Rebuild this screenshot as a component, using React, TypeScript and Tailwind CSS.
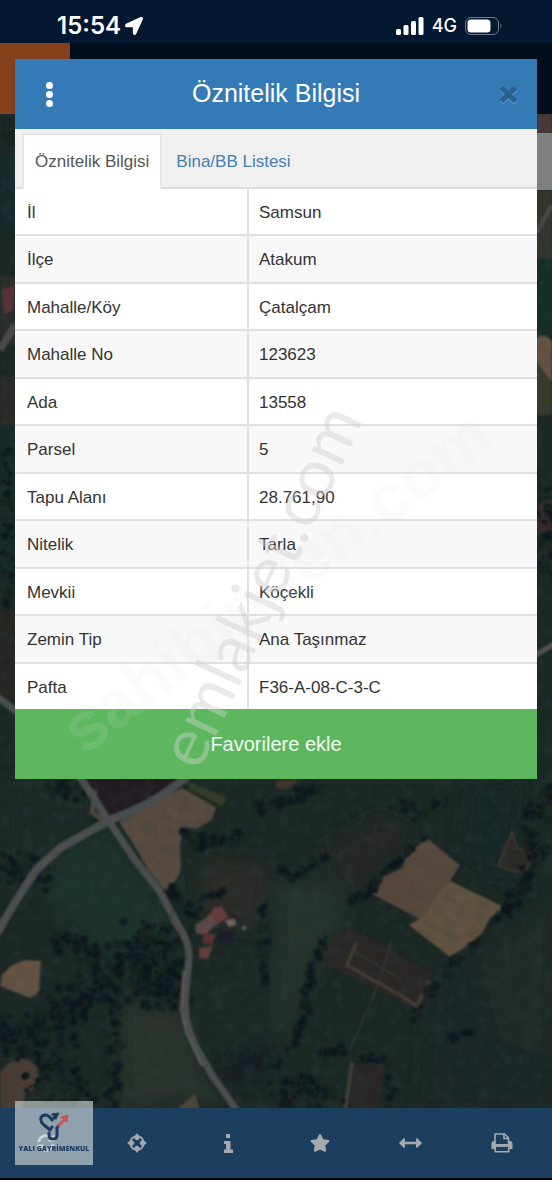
import { FaLocationArrow, FaStar, FaSyncAlt } from 'react-icons/fa';

const attributes = [
    { label: 'İl', value: 'Samsun' },
    { label: 'İlçe', value: 'Atakum' },
    { label: 'Mahalle/Köy', value: 'Çatalçam' },
    { label: 'Mahalle No', value: '123623' },
    { label: 'Ada', value: '13558' },
    { label: 'Parsel', value: '5' },
    { label: 'Tapu Alanı', value: '28.761,90' },
    { label: 'Nitelik', value: 'Tarla' },
    { label: 'Mevkii', value: 'Köçekli' },
    { label: 'Zemin Tip', value: 'Ana Taşınmaz' },
    { label: 'Pafta', value: 'F36-A-08-C-3-C' },
];

// Tree lines: points, spread around the line, number of crowns
const treeLines: { points: number[][]; spread: number; count: number }[] = [
    { points: [[0, 1045], [45, 1030], [70, 1000], [110, 985]], spread: 22, count: 230 },
    { points: [[110, 985], [125, 950], [150, 935], [180, 935]], spread: 11, count: 80 },
    { points: [[140, 940], [150, 975], [170, 995]], spread: 22, count: 230 },
    { points: [[55, 940], [75, 945], [95, 958]], spread: 9, count: 45 },
    { points: [[20, 1085], [60, 1060], [80, 1085], [60, 1110]], spread: 14, count: 70 },
    { points: [[110, 990], [115, 1050], [110, 1105]], spread: 6, count: 45 },
    { points: [[0, 870], [30, 865], [35, 885]], spread: 14, count: 50 },
    { points: [[50, 780], [85, 795]], spread: 9, count: 30 },
    { points: [[183, 832], [205, 845], [250, 830]], spread: 5, count: 45 },
    { points: [[255, 810], [290, 798], [320, 790]], spread: 6, count: 35 },
    { points: [[170, 890], [190, 910], [215, 890]], spread: 7, count: 30 },
    { points: [[262, 900], [265, 950], [262, 985]], spread: 4, count: 25 },
    { points: [[276, 868], [295, 877], [325, 858]], spread: 2, count: 45 },
    { points: [[345, 900], [370, 895], [385, 870], [425, 840]], spread: 3, count: 55 },
    { points: [[330, 937], [313, 960], [305, 1010], [295, 1045], [276, 1065]], spread: 4, count: 70 },
    { points: [[320, 1055], [345, 1050], [390, 1065], [392, 1105]], spread: 4, count: 45 },
    { points: [[552, 790], [530, 825], [540, 850], [515, 890], [505, 910]], spread: 9, count: 120 },
    { points: [[505, 910], [470, 948], [430, 990], [410, 1020]], spread: 4, count: 45 },
    { points: [[450, 1040], [470, 1033]], spread: 3, count: 14 },
    { points: [[276, 800], [320, 787]], spread: 4, count: 22 },
    { points: [[390, 798], [420, 815], [450, 800]], spread: 6, count: 22 },
    { points: [[546, 480], [546, 520], [544, 570]], spread: 8, count: 40 },
    { points: [[5, 450], [6, 570], [6, 610]], spread: 6, count: 40 },
    { points: [[270, 1100], [300, 1080], [335, 1100]], spread: 14, count: 60 },
];

function makeTrees() {
    let seed = 17;
    const rand = () => {
        seed = (seed * 16807) % 2147483647;
        return seed / 2147483647;
    };
    const trees: { x: number; y: number; r: number; fill: string }[] = [];
    treeLines.forEach(({ points, spread, count }) => {
        for (let i = 0; i < count; i++) {
            const t = rand() * (points.length - 1);
            const k = Math.floor(t);
            const [ax, ay] = points[k];
            const [bx, by] = points[k + 1];
            trees.push({
                x: ax + (bx - ax) * (t - k) + (rand() + rand() - 1) * 1.4 * spread,
                y: ay + (by - ay) * (t - k) + (rand() + rand() - 1) * 1.4 * spread,
                r: 1 + rand() * 3,
                fill: rand() > 0.35 ? '#0d161c' : '#14221f',
            });
        }
    });
    return trees;
}

const trees = makeTrees();

function SatelliteMap() {
    return (
        <svg className="absolute inset-0 -z-10 h-full w-full" viewBox="0 0 552 1180" preserveAspectRatio="xMidYMid slice" aria-hidden="true">
            <defs>
                <filter id="soft" x="-5%" y="-5%" width="110%" height="110%">
                    <feGaussianBlur stdDeviation="1.1" />
                </filter>
                <filter id="haze" x="-30%" y="-30%" width="160%" height="160%">
                    <feGaussianBlur stdDeviation="9" />
                </filter>
                <filter id="grain">
                    <feTurbulence type="fractalNoise" baseFrequency="0.09" numOctaves="4" seed="4" />
                    <feColorMatrix values="0 0 0 0 0.03  0 0 0 0 0.06  0 0 0 0 0.07  1.8 0 0 0 -0.75" />
                </filter>
            </defs>
            <rect width="552" height="1180" fill="#1b2824" />
            <g filter="url(#haze)">
                <path d="M0 780L90 785L90 840L0 900Z" fill="#1c2c28" />
                <path d="M60 850L110 830L180 930L110 960L40 900Z" fill="#1c302a" />
                <path d="M120 1000L180 1010L220 1100L120 1110Z" fill="#29322b" />
                <path d="M195 980L276 960L290 1080L235 1085Z" fill="#1d2927" />
                <path d="M276 880L340 880L345 930L300 1000L276 1060Z" fill="#283129" />
                <path d="M320 850L380 815L415 835L345 895Z" fill="#262625" />
                <path d="M430 960L500 930L552 1000L552 1110L420 1110Z" fill="#1a2825" />
                <path d="M470 780L520 780L505 880L460 855Z" fill="#172628" />
                <path d="M200 860L270 860L260 930L200 920Z" fill="#2b2c28" />
                <path d="M480 960L552 900L552 1060L500 1040Z" fill="#222c27" />
                <path d="M200 1070L276 1035L270 1075L230 1085Z" fill="#161d20" />
            </g>
            <g filter="url(#soft)">
                {/* strips that stay visible beside the dialog */}
                <path d="M0 114H16V155H0Z" fill="#1b2422" />
                <path d="M0 155H16V232H0Z" fill="#142c2a" />
                <path d="M0 275H16V345H0Z" fill="#2b2f2b" />
                <path d="M2 290L15 285L13 310L4 314Z" fill="#5c3335" />
                <path d="M0 350L15 325" stroke="#4d4c49" strokeWidth="7" />
                <path d="M0 375H16V425H0Z" fill="#2a2c25" />
                <path d="M0 425H16V570H0Z" fill="#122a25" />
                <path d="M0 610H16V700H0Z" fill="#272721" />
                <path d="M536 114H552V134H536Z" fill="#4b3837" />
                <path d="M536 190H552V258H536Z" fill="#34362f" />
                <path d="M537 232L552 205" stroke="#4c4b45" strokeWidth="4" />
                <path d="M536 258H552V335H536Z" fill="#152d26" />
                <path d="M536 338Q546 332 552 342V382L536 362Z" fill="#66533f" />
                <path d="M536 362L552 382V415H536Z" fill="#393b2b" />
                <path d="M536 505L552 498V535H536Z" fill="#372b2c" />
                <path d="M532 657L556 643" stroke="#555653" strokeWidth="5" />

                <path d="M86 778L182 778Q150 800 110 816Z" fill="#211e21" />
                <path d="M185 780L228 798L222 806L190 790Z" fill="#343b2c" />
                <path d="M119 822Q140 812 158 800L182 788L216 807L212 820L196 829L184 827L180 845L181 868Q178 884 164 890L150 872L136 848Z" fill="#594b40" />
                <path d="M124 824L150 872M160 806L158 860M180 795L168 850" stroke="#645443" strokeWidth="2" opacity="0.4" />
                <path d="M428 839L460 865L450 881L428 925L412 915L372 894L378 880L402 868L410 850Z" fill="#58493d" />
                <path d="M374 894L380 880L400 874L416 886L412 914Z" fill="#59463e" />
                <path d="M450 881L504 907L490 918L482 933L464 948L450 957L409 925L426 915L434 898Z" fill="#625241" />
                <path d="M430 925L455 938L482 930M440 895L482 915" fill="none" stroke="#50432f" opacity="0.7" />
                <path d="M12 965L25 960L41 961L39 993L30 998L0 986L2 975Z" fill="#655242" />
                <path d="M0 1073Q10 1058 24 1059Q40 1062 38 1080L36 1089L26 1092L22 1110L0 1110Z" fill="#4b3e35" />
                <path d="M350 928L432 972L420 1012L328 966L330 940Z" fill="#292826" />
                <path d="M357 942L347 965L405 998L417 1006L429 981" fill="none" stroke="#463d35" strokeWidth="3" />
                <path d="M355 952L402 980M392 940L378 985L350 1050" fill="none" stroke="#443f35" strokeWidth="2" opacity="0.5" />
                <path d="M498 866L512 832L517 848L534 852L524 874Z" fill="#2b2c27" stroke="#42362f" strokeWidth="2" />
                <path d="M350 1063L385 1065L378 1110L345 1110Z" fill="#2c2827" />
                <path d="M352 1062L345 1110" stroke="#45433b" strokeWidth="3" />
                <path d="M176 1110L195 1094L200 1110Z" fill="#51463a" />
                <path d="M276 780L300 778L288 790L276 788Z" fill="#3d352b" />
                <path d="M95 790L92 812L108 824L64 843" fill="none" stroke="#4f463c" strokeWidth="5" />

                {trees.map((tree, idx) => (
                    <circle key={idx} cx={tree.x} cy={tree.y} r={tree.r} fill={tree.fill} />
                ))}

                <g fill="none" stroke="#4e504f" strokeLinejoin="round">
                    <path d="M-4 696L35 725L82 780L108 820L135 860L160 892L178 925Q190 942 189 960L186 990Q182 1020 196 1047L212 1075L240 1115" strokeWidth="7" />
                    <path d="M190 774Q160 800 130 812L108 821L60 848L36 870L14 904L-4 935" strokeWidth="8" />
                    <path d="M184 970L181 1010L186 1032L202 1066" strokeWidth="2" stroke="#63625d" />
                    <path d="M172 908L172 922L182 935" strokeWidth="3" stroke="#4b473e" />
                </g>

                <path d="M215 907L222 906L228 917L214 927L206 919Z" fill="#6b3b3e" />
                <path d="M195 925L210 915L217 924L206 934L196 934Z" fill="#5b4a47" />
                <path d="M203 932L216 935L212 945L203 943Z" fill="#5c3134" />
                <path d="M199 948L213 946L208 959L199 958Z" fill="#633f39" />
                <path d="M225 920L235 919L236 925L229 927Z" fill="#7a6462" />
                <path d="M218 930L234 930L232 944L220 942Z" fill="#1c1f2c" />
                <circle cx="244" cy="928" r="2" fill="#756f68" />
            </g>
            <rect y="114" width="552" height="1000" filter="url(#grain)" opacity="0.35" />
        </svg>
    );
}

function CloseIcon() {
    return (
        <svg width="19" height="19" viewBox="0 0 19 19" fill="none" strokeWidth="5" aria-hidden="true">
            <path d="M2.5 4L16.5 18M16.5 4L2.5 18" stroke="#5793c6" />
            <path d="M2.5 2.5L16.5 16.5M16.5 2.5L2.5 16.5" stroke="#2a618f" />
        </svg>
    );
}

function CrosshairIcon() {
    return (
        <svg width="20" height="20" viewBox="0 0 20 20" fill="none" stroke="currentColor" aria-hidden="true">
            <circle cx="10" cy="10" r="6.8" strokeWidth="1.8" />
            <path d="M10 0L12.5 3.5V6L10 7.5L7.5 6V3.5ZM10 20L12.5 16.5V14L10 12.5L7.5 14V16.5ZM0 10L3.5 7.5H6L7.5 10L6 12.5H3.5ZM20 10L16.5 7.5H14L12.5 10L14 12.5H16.5Z" fill="currentColor" stroke="none" />
        </svg>
    );
}

function InfoIcon() {
    return (
        <svg width="9" height="19" viewBox="0 0 9 19" fill="currentColor" aria-hidden="true">
            <path d="M2 0H6V4H2Z" />
            <path d="M0 7H6.5V15.5H9V19H0V15.5H2V10H0Z" />
        </svg>
    );
}

function ArrowsIcon() {
    return (
        <svg width="23" height="10" viewBox="0 0 23 10" fill="currentColor" aria-hidden="true">
            <path d="M0 5L5 0L6 1V3.7H17V1L18 0L23 5L18 10L17 9V6.3H6V9L5 10Z" />
        </svg>
    );
}

function PrintIcon() {
    return (
        <svg width="22" height="20" viewBox="0 0 22 20" fill="none" stroke="currentColor" strokeWidth="1.6" aria-hidden="true">
            <path d="M4 11V1H13.5L17.5 5V11" />
            <path d="M13 1V5.5H17.5" />
            <path d="M3 8H4V11H18V8H19Q21.5 8 21.5 11V16H18V13.5H4V16H0.5V11Q0.5 8 3 8Z" fill="currentColor" stroke="none" />
            <path d="M4.2 13H17.8V18.8H4.2Z" />
        </svg>
    );
}

function StatusBar() {
    return (
        <header className="flex h-[43px] items-center justify-between bg-[#031830] pt-2 pr-[49px] pl-[57px] text-white">
            <div className="flex items-center gap-1">
                <span className="font-['Inter',sans-serif] text-2xl font-semibold">15:54</span>
                <FaLocationArrow size={18} />
            </div>
            <div className="flex items-center gap-2">
                <svg width="28" height="18" viewBox="0 0 28 18" fill="currentColor" aria-hidden="true">
                    <rect x="0" y="12" width="5" height="6" rx="1.5" />
                    <rect x="7.5" y="8" width="5" height="10" rx="1.5" />
                    <rect x="15" y="4" width="5" height="14" rx="1.5" />
                    <rect x="22.5" y="0" width="5" height="18" rx="1.5" />
                </svg>
                <span className="font-['Inter',sans-serif] text-lg font-medium">4G</span>
                <svg width="38" height="18" viewBox="0 0 38 18" aria-hidden="true">
                    <rect x="0.5" y="0.5" width="33" height="17" rx="5.5" fill="none" stroke="#6f7b88" />
                    <rect x="2.5" y="2.5" width="23" height="13" rx="3.5" fill="white" />
                    <path d="M35.5 6.5Q37.5 9 35.5 11.5Z" fill="#6f7b88" />
                </svg>
            </div>
        </header>
    );
}

function AttributeDialog() {
    return (
        <section role="dialog" aria-labelledby="dialog-title" className="mx-[15px] bg-white">
            <div className="flex h-[70px] items-center justify-between bg-[#347ab7] pr-[19px] pl-[30px] text-white">
                <button type="button" aria-label="Menü" className="flex w-2 flex-col items-center gap-[2px]">
                    <span className="size-[7px] rounded-full bg-white" />
                    <span className="size-[7px] rounded-full bg-white" />
                    <span className="size-[7px] rounded-full bg-white" />
                </button>
                <h1 id="dialog-title" className="text-[25px]">Öznitelik Bilgisi</h1>
                <button type="button" aria-label="Kapat">
                    <CloseIcon />
                </button>
            </div>

            <div role="tablist" className="flex h-[60px] items-end border-b-2 border-[#dedede] bg-[#f0f0f0] pl-[7px] text-[17px]">
                <button type="button" role="tab" aria-selected="true" className="-mb-[2px] h-[56px] border-2 border-b-0 border-[#e6e6e6] bg-white px-[11px] text-[#555]">
                    Öznitelik Bilgisi
                </button>
                <button type="button" role="tab" aria-selected="false" className="-mb-[2px] h-[56px] px-[14px] pt-[2px] text-[#4380b0]">
                    Bina/BB Listesi
                </button>
            </div>

            <table className="h-[520px] w-full table-fixed border-collapse text-left text-[17px] text-[#333]">
                <tbody>
                    {attributes.map((row) => (
                        <tr key={row.label} className="border-b-2 border-[#e0e0e0] last:border-b-0 even:bg-[#f8f8f8]">
                            <th scope="row" className="w-[233px] border-r-2 border-[#e0e0e0] px-3 pt-[2px] font-normal">{row.label}</th>
                            <td className="px-[10px] pt-[2px]">{row.value}</td>
                        </tr>
                    ))}
                </tbody>
            </table>

            <button type="button" className="h-[70px] w-full bg-[#5db75f] text-xl text-[#f1fbf1]">Favorilere ekle</button>
        </section>
    );
}

function Watermarks() {
    return (
        <svg className="pointer-events-none absolute inset-0 h-full w-full" viewBox="0 0 552 1180" preserveAspectRatio="xMidYMid slice" aria-hidden="true">
            <text transform="translate(84 756) rotate(-37)" className="font-['Liberation_Sans',sans-serif] text-[68px] font-bold" fill="#dddddd" opacity="0.13">sahibinden.com</text>
            <text transform="translate(199 772) rotate(-65)" className="font-['Lato',sans-serif] text-[67px]" fill="#cfcfcf" opacity="0.45">emlakjet.com</text>
        </svg>
    );
}

function BrandBadge() {
    return (
        <div className="absolute bottom-[13px] left-[15px] flex h-16 w-[78px] flex-col items-center bg-[#dce3df]/60 pt-[11px]">
            <svg width="30" height="30" viewBox="0 0 30 30" fill="none" strokeWidth="3" strokeLinecap="round" strokeLinejoin="round" aria-hidden="true">
                <path d="M16 5L13 8Q10 3 6 3Q1 4 2 8Q2 10 4 12L11 18L13 15" stroke="#1d3a61" />
                <path d="M13 2L20 1L17 7Z" fill="#1d3a61" stroke="#1d3a61" strokeWidth="1" />
                <path d="M18 16V23Q18 27 14 27Q10 27 10 23V21" stroke="#1d3a61" />
                <path d="M18 16L20 13" stroke="#1d3a61" />
                <path d="M20 13L26 7" stroke="#c9555a" />
                <path d="M22 5L29 3L28 10Z" fill="#c9555a" stroke="#c9555a" strokeWidth="1" />
            </svg>
            <span className="font-['Open_Sans',sans-serif] text-[7px] leading-[14px] font-extrabold whitespace-nowrap text-[#1d3a61]">YALI GAYRİMENKUL</span>
        </div>
    );
}

export default function App() {
    return (
        <div className="relative isolate flex min-h-screen flex-col overflow-hidden bg-[#1a2823] font-['Liberation_Sans',Arial,sans-serif]">
            <SatelliteMap />
            {/* App header and map control that the dialog covers */}
            <div className="absolute inset-x-0 top-[43px] -z-10 h-[71px] bg-[#010f1c]">
                <div className="h-full w-[70px] bg-[#84411b]" />
            </div>
            <div className="absolute top-[133px] right-0 -z-10 h-[57px] w-6 bg-[#808080]" />

            <StatusBar />
            <main className="flex-1 pt-4">
                <AttributeDialog />
            </main>

            <footer className="relative border-b-2 border-[#04080c] bg-[#1d3f5f] text-[#a5a9ae]">
                <nav className="mr-1 grid h-[70px] grid-cols-6 place-items-center">
                    <button type="button" aria-label="Yenile" className="text-[#c4ccd2]"><FaSyncAlt size={18} /></button>
                    <button type="button" aria-label="Konumum"><CrosshairIcon /></button>
                    <button type="button" aria-label="Bilgi"><InfoIcon /></button>
                    <button type="button" aria-label="Favoriler"><FaStar size={20} /></button>
                    <button type="button" aria-label="Ölçüm"><ArrowsIcon /></button>
                    <button type="button" aria-label="Yazdır"><PrintIcon /></button>
                </nav>
                <BrandBadge />
            </footer>
            <Watermarks />
        </div>
    );
}
